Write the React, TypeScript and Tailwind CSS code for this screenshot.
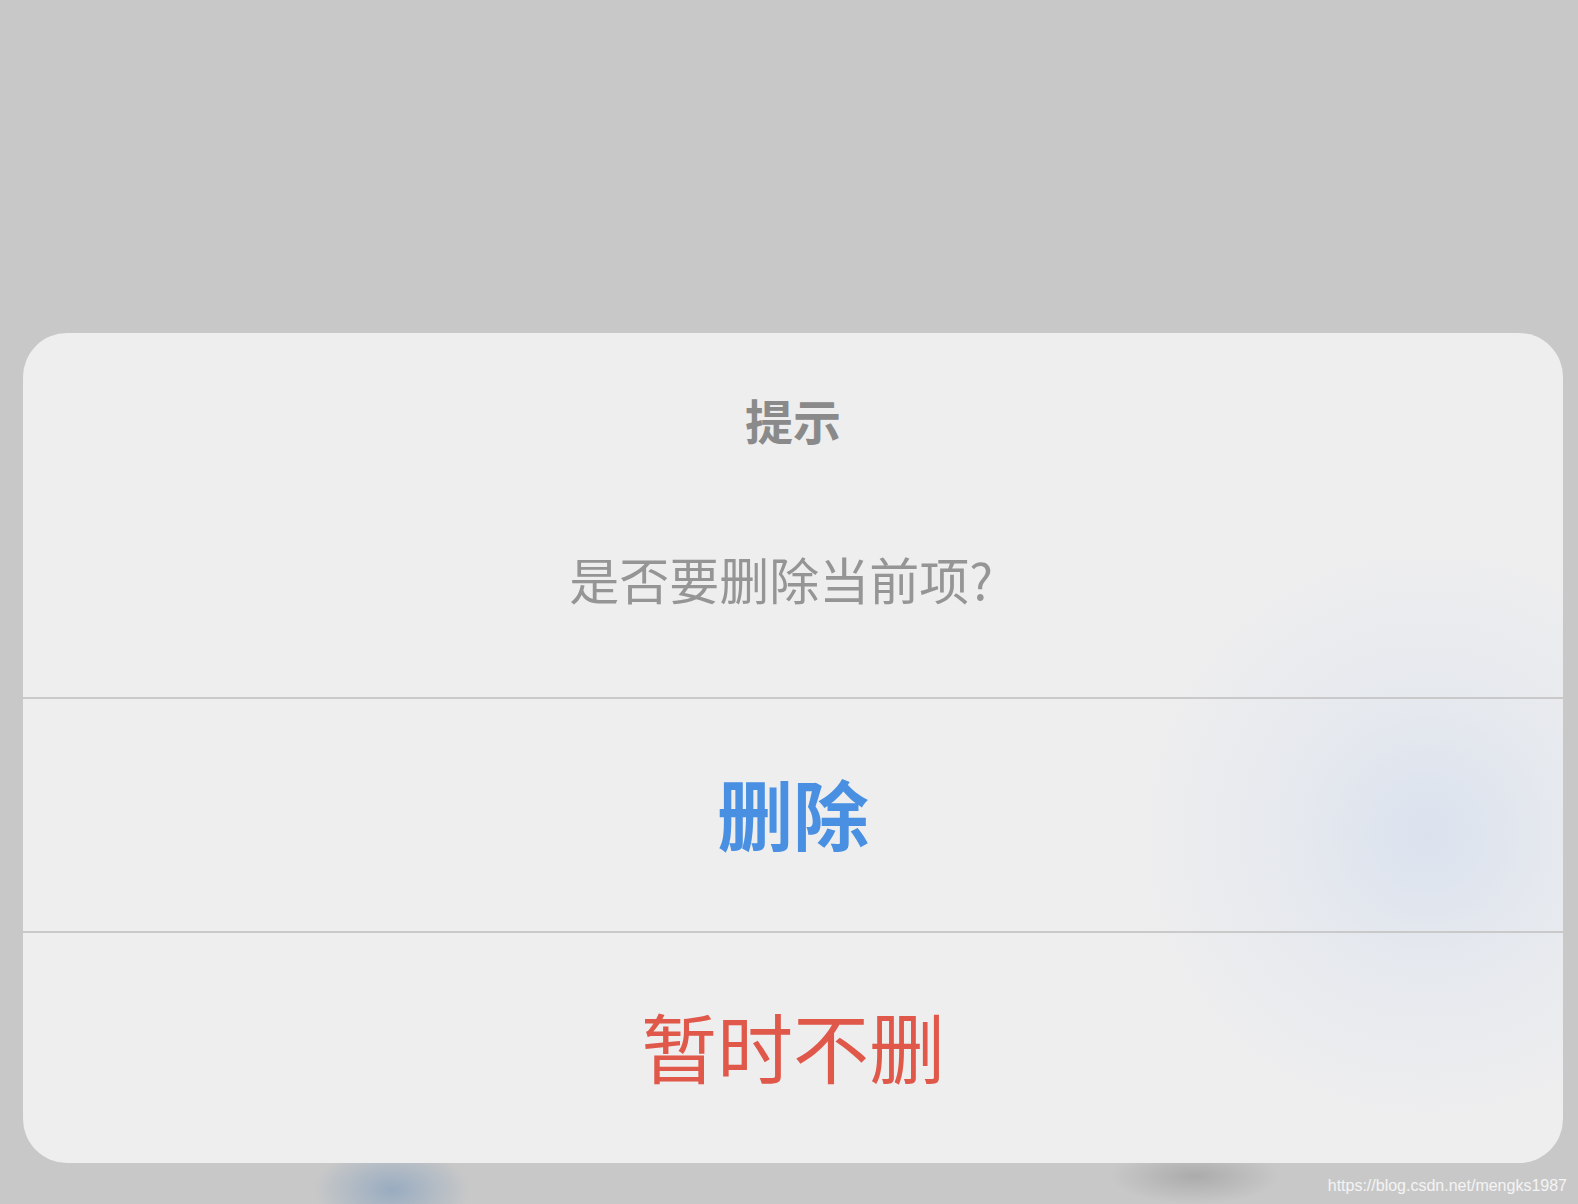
import React from 'react';

const cjk = "font-['PingFang_SC','Noto_Sans_CJK_SC',sans-serif]";

export default function App() {
  return (
    <div className="h-[1204px] w-full overflow-hidden bg-[#c8c8c8] bg-[radial-gradient(ellipse_78px_44px_at_392px_1190px,rgba(150,170,192,0.95)_0%,rgba(200,200,200,0)_100%),radial-gradient(ellipse_85px_28px_at_1195px_1176px,rgba(168,168,168,0.9)_0%,rgba(200,200,200,0)_100%)] pt-[333px]">
      {/* dialog */}
      <div className="ml-[23px] w-[1540px] overflow-hidden rounded-[44px] bg-[#eeeeee] bg-[radial-gradient(circle_at_1404px_500px,rgba(218,226,238,1)_0px,rgba(225,230,238,0.7)_120px,rgba(238,238,238,0)_300px)]">
        <div className={`flex h-[364px] flex-col items-center ${cjk}`}>
          <div className="mt-[62px] text-[48px] font-bold leading-[48px] text-[#8a8a8a]">提示</div>
          <div className="mt-[110px] pr-[24px] text-[50px] leading-[50px] text-[#959595]">是否要删除当前项?</div>
        </div>
        <div className="h-[2px] bg-[#c9c9c9]" />
        <div className={`flex h-[232px] items-center justify-center pb-[6px] ${cjk}`}>
          <span className="text-[76px] font-bold leading-none text-[#4a90e2]">删除</span>
        </div>
        <div className="h-[2px] bg-[#c9c9c9]" />
        <div className={`flex h-[230px] items-center justify-center pb-[6px] ${cjk}`}>
          <span className="text-[76px] leading-none text-[#e0584a]">暂时不删</span>
        </div>
      </div>
      <div className="mt-[13px] pr-[11px] text-right font-['Liberation_Sans',Arial,sans-serif] text-[16px] leading-[20px] text-white/80">
        https://blog.csdn.net/mengks1987
      </div>
    </div>
  );
}
